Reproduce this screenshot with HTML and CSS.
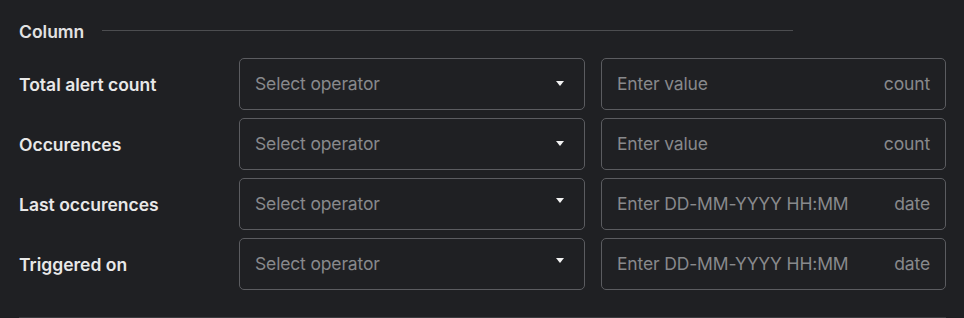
FILE: index.html
```html
<!DOCTYPE html>
<html>
<head>
<meta charset="utf-8">
<link rel="stylesheet" href="styles.css">
</head>
<body>
<div class="panel">
  <div class="section-head">
    <span class="section-title">Column</span>
    <span class="section-rule"></span>
  </div>
  <div class="rows">
    <div class="row">
      <div class="label">Total alert count</div>
      <div class="field select"><span class="ph">Select operator</span><span class="caret"></span></div>
      <div class="field"><span class="ph">Enter value</span><span class="unit">count</span></div>
    </div>
    <div class="row">
      <div class="label">Occurences</div>
      <div class="field select"><span class="ph">Select operator</span><span class="caret"></span></div>
      <div class="field"><span class="ph">Enter value</span><span class="unit">count</span></div>
    </div>
    <div class="row">
      <div class="label">Last occurences</div>
      <div class="field select"><span class="ph">Select operator</span><span class="caret up"></span></div>
      <div class="field"><span class="ph">Enter DD-MM-YYYY HH:MM</span><span class="unit">date</span></div>
    </div>
    <div class="row">
      <div class="label">Triggered on</div>
      <div class="field select"><span class="ph">Select operator</span><span class="caret up"></span></div>
      <div class="field"><span class="ph">Enter DD-MM-YYYY HH:MM</span><span class="unit">date</span></div>
    </div>
  </div>
  <div class="next-block"></div>
</div>
</body>
</html>
```
FILE: styles.css
```css
html, body {
  margin: 0;
  padding: 0;
  background: #1f2023;
  height: 100%;
  overflow: hidden;
}
.panel {
  padding: 20px 18px 0 19px;
  font-family: Inter, "Noto Sans", sans-serif;
  color: #e6e6e6;
}
.section-head {
  display: flex;
  align-items: center;
  gap: 18px;
  width: 774px;
  height: 22px;
}
.section-title {
  font-size: 17.5px;
  font-weight: 600;
  color: #e2e2e2;
}
.section-rule {
  flex: 1;
  height: 1px;
  background: #4c4d50;
  margin-top: -2px;
}
.rows {
  margin-top: 16px;
  display: flex;
  flex-direction: column;
  gap: 8px;
}
.row {
  display: grid;
  grid-template-columns: 204px 346px 345px;
  column-gap: 16px;
  align-items: center;
}
.label {
  font-size: 17.5px;
  font-weight: 600;
  color: #e8e8e8;
}
.field {
  box-sizing: border-box;
  height: 52px;
  border: 1px solid #5b5c60;
  border-radius: 5px;
  display: flex;
  align-items: center;
  justify-content: space-between;
  padding: 0 15px 2px 15px;
  font-size: 17.5px;
  font-weight: 400;
  letter-spacing: -0.15px;
  color: #88898c;
}
.unit {
  color: #88898c;
}
.caret {
  width: 0;
  height: 0;
  border-left: 4.5px solid transparent;
  border-right: 4.5px solid transparent;
  border-top: 5px solid #f2f2f2;
  margin-right: 5px;
}
.caret.up {
  margin-top: -6px;
}
.next-block {
  margin-top: 27px;
  height: 6px;
  width: 927px;
  background: #3b3c3f;
}
```
